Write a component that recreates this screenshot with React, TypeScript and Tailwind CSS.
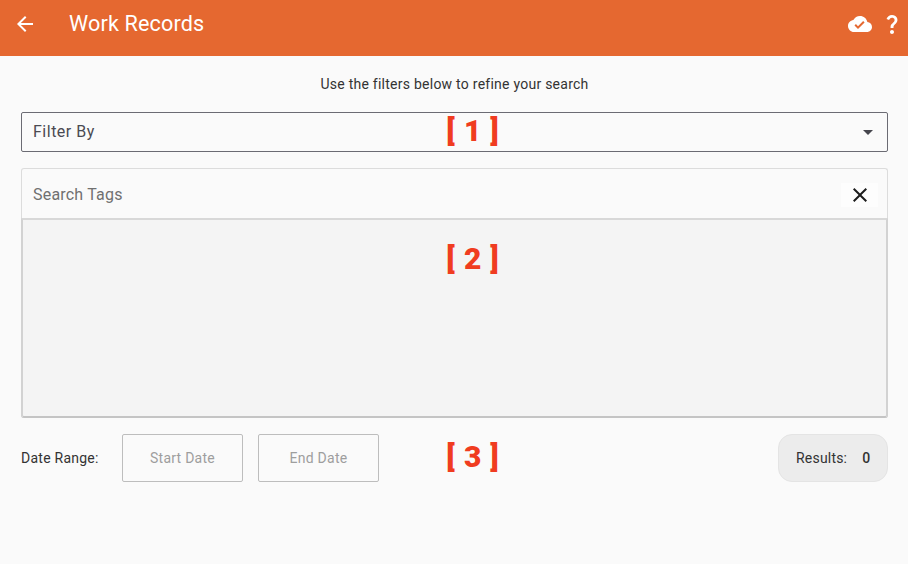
import type { ReactNode } from 'react'

const roboto = "font-['Roboto',sans-serif]"

function Icon({ d, className }: { d: string; className?: string }) {
  return (
    <svg viewBox="0 0 24 24" fill="currentColor" className={className}>
      <path d={d} />
    </svg>
  )
}

function Marker({ children, className }: { children: ReactNode; className: string }) {
  return (
    <span className={`absolute left-[437px] w-[72px] text-center whitespace-pre font-['Roboto',sans-serif] font-black text-[30px] leading-[36px] tracking-[0.8px] text-[#f03c20] ${className}`}>
      {children}
    </span>
  )
}

export default function App() {
  return (
    <div className={`relative h-[564px] w-[908px] overflow-hidden bg-[#fafafa] ${roboto}`}>
      {/* Toolbar */}
      <header className="flex h-14 items-center bg-[#e56830] pb-2 text-white">
        <Icon
          className="ml-[13px] h-6 w-6"
          d="M20 11H7.83l5.59-5.59L12 4l-8 8 8 8 1.41-1.41L7.83 13H20v-2z"
        />
        <h1 className="ml-8 text-[21.6px] font-normal leading-6 tracking-[0.15px]">Work Records</h1>
        <div className="ml-auto mr-1 flex items-center gap-2">
          <Icon
            className="h-6 w-6"
            d="M19.35 10.04C18.67 6.59 15.64 4 12 4 9.11 4 6.6 5.64 5.35 8.04 2.34 8.36 0 10.91 0 14c0 3.31 2.69 6 6 6h13c2.76 0 5-2.24 5-5 0-2.64-2.05-4.78-4.65-4.96zM10 17l-3.5-3.5 1.41-1.41L10 14.17 15.18 9l1.41 1.41L10 17z"
          />
          <Icon
            className="h-6 w-6"
            d="M11.07 12.85c.77-1.39 2.25-2.21 3.11-3.44.91-1.29.4-3.7-2.18-3.7-1.69 0-2.52 1.28-2.87 2.34L6.54 6.96C7.25 4.83 9.18 3 11.99 3c2.35 0 3.96 1.07 4.78 2.41.7 1.15 1.11 3.3.03 4.9-1.2 1.77-2.35 2.31-2.97 3.45-.25.46-.35.76-.35 2.24h-2.89c-.01-.78-.13-2.05.48-3.15zM14 20c0 1.1-.9 2-2 2s-2-.9-2-2 .9-2 2-2 2 .9 2 2z"
          />
        </div>
      </header>

      <main className="px-[20px] pl-[21px]">
        <p className="mt-[20px] text-center text-[14px] leading-4 tracking-[0.25px] text-[#333333]">
          Use the filters below to refine your search
        </p>

        {/* Filter select */}
        <div className="mt-5 flex h-10 items-center justify-between rounded-[2px] border border-[#6b6b73] pl-[11px] pr-[14px]">
          <span className="text-[16px] tracking-[0.5px] text-[#4a4a52]">Filter By</span>
          <span className="h-0 w-0 border-x-[5px] border-t-[5px] border-x-transparent border-t-[#45454d]" />
        </div>

        {/* Tags panel */}
        <section className="mt-4 h-[250px] rounded-[3px] border-x border-t border-[#dcdcdc]">
          <div className="flex h-[49px] items-center justify-between pl-[11px] pr-[9px] pt-[2px]">
            <span className="text-[16px] tracking-[0.2px] text-[#707070]">Search Tags</span>
            <span className="flex h-6 w-[37px] items-center justify-center bg-[#fdfdfd]">
              <Icon
                className="h-6 w-6 text-[#1c1c1c]"
                d="M19 6.41 17.59 5 12 10.59 6.41 5 5 6.41 10.59 12 5 17.59 6.41 19 12 13.41 17.59 19 19 17.59 13.41 12z"
              />
            </span>
          </div>
          <div className="-mx-px h-[200px] rounded-b-[3px] border-x-2 border-y-2 border-x-[#d2d2d2] border-t-[#d8d8d8] border-b-[#c4c4c4] bg-[#f4f4f4]" />
        </section>

        {/* Date range + results */}
        <div className="mt-4 flex h-12 items-center">
          <span className="w-[101px] text-[14px] tracking-[0.25px] text-[#333333]">Date Range:</span>
          <button className="h-12 w-[121px] rounded-[2px] border border-[#bdbdbd] text-[14px] tracking-[0.25px] text-[#9e9e9e]">
            Start Date
          </button>
          <button className="ml-[15px] h-12 w-[121px] rounded-[2px] border border-[#bdbdbd] text-[14px] tracking-[0.25px] text-[#9e9e9e]">
            End Date
          </button>
          <div className="ml-auto flex h-12 w-[110px] items-center rounded-[14px] border border-[#e4e4e4] bg-[#ececec] pl-[17px] text-[14px] tracking-[0.2px] text-[#333333]">
            Results:
            <span className="ml-[15px] font-medium">0</span>
          </div>
        </div>
      </main>

      <Marker className="top-[113px]">[ 1 ]</Marker>
      <Marker className="top-[241px]">[ 2 ]</Marker>
      <Marker className="top-[439px]">[ 3 ]</Marker>
    </div>
  )
}
